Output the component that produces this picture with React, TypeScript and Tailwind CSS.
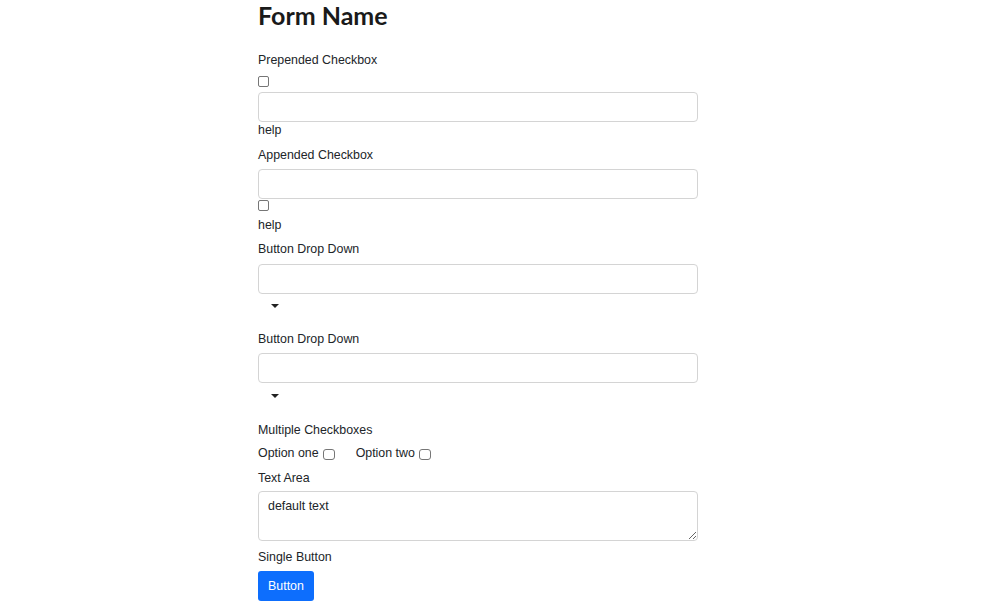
import React from 'react';

const Label: React.FC<{ children: React.ReactNode; className?: string }> = ({ children, className = '' }) => (
    <label className={`block leading-[15px] ${className}`}>{children}</label>
);

const Check: React.FC<{ className?: string }> = ({ className = '' }) => (
    <input
        type="checkbox"
        className={`block appearance-none w-[11px] h-[11px] border border-[#767676] rounded-[2px] bg-white ${className}`}
    />
);

const TextInput: React.FC<{ className?: string }> = ({ className = '' }) => (
    <input type="text" className={`block w-full h-[30px] border border-[#d4d4d4] rounded-[4px] bg-white px-[10px] ${className}`} />
);

const Caret: React.FC = () => (
    <div className="ml-[13px] w-0 h-0 border-l-[4px] border-r-[4px] border-t-[4px] border-l-transparent border-r-transparent border-t-[#222]" />
);

const App: React.FC = () => {
    return (
        <div className="min-h-screen bg-white text-[#212529] text-[12.4px] font-['Liberation_Sans',Arial,sans-serif]">
            <div className="w-[440px] ml-[258px]">
                <h1 className="font-['Lato',sans-serif] font-bold text-[25px] leading-[30px] text-[#1a1a1a]">Form Name</h1>

                {/* Prepended checkbox */}
                <Label className="mt-[23px]">Prepended Checkbox</Label>
                <Check className="mt-[8px]" />
                <TextInput className="mt-[5px]" />
                <div className="leading-[15px] mt-[1px]">help</div>

                {/* Appended checkbox */}
                <Label className="mt-[10px]">Appended Checkbox</Label>
                <TextInput className="mt-[6px]" />
                <Check className="mt-[1px]" />
                <div className="leading-[15px] mt-[7px]">help</div>

                {/* Button drop downs */}
                <Label className="mt-[9px]">Button Drop Down</Label>
                <TextInput className="mt-[7px]" />
                <div className="mt-[10px] mb-[24px]"><Caret /></div>

                <Label>Button Drop Down</Label>
                <TextInput className="mt-[6px]" />
                <div className="mt-[11px] mb-[25px]"><Caret /></div>

                {/* Multiple checkboxes */}
                <Label>Multiple Checkboxes</Label>
                <div className="flex items-center mt-[8px] leading-[15px]">
                    <span>Option one</span>
                    <Check className="ml-[4px] w-[12px] h-[11px] mt-[1px] border-[#8a8a8a] rounded-[3px]" />
                    <span className="ml-[21px]">Option two</span>
                    <Check className="ml-[4px] w-[12px] h-[11px] mt-[1px] border-[#8a8a8a] rounded-[3px]" />
                </div>

                {/* Text area */}
                <Label className="mt-[10px]">Text Area</Label>
                <textarea
                    className="block w-full h-[50px] mt-[5px] border border-[#d4d4d4] rounded-[4px] px-[9px] py-[7px] leading-[15px] resize-y"
                    defaultValue="default text"
                />

                {/* Single button */}
                <Label className="mt-[9px]">Single Button</Label>
                <button className="mt-[6px] w-[56px] h-[30px] bg-[#0d6efd] text-white rounded-[3px] text-[12.4px]">Button</button>
            </div>
        </div>
    );
};

export default App;
